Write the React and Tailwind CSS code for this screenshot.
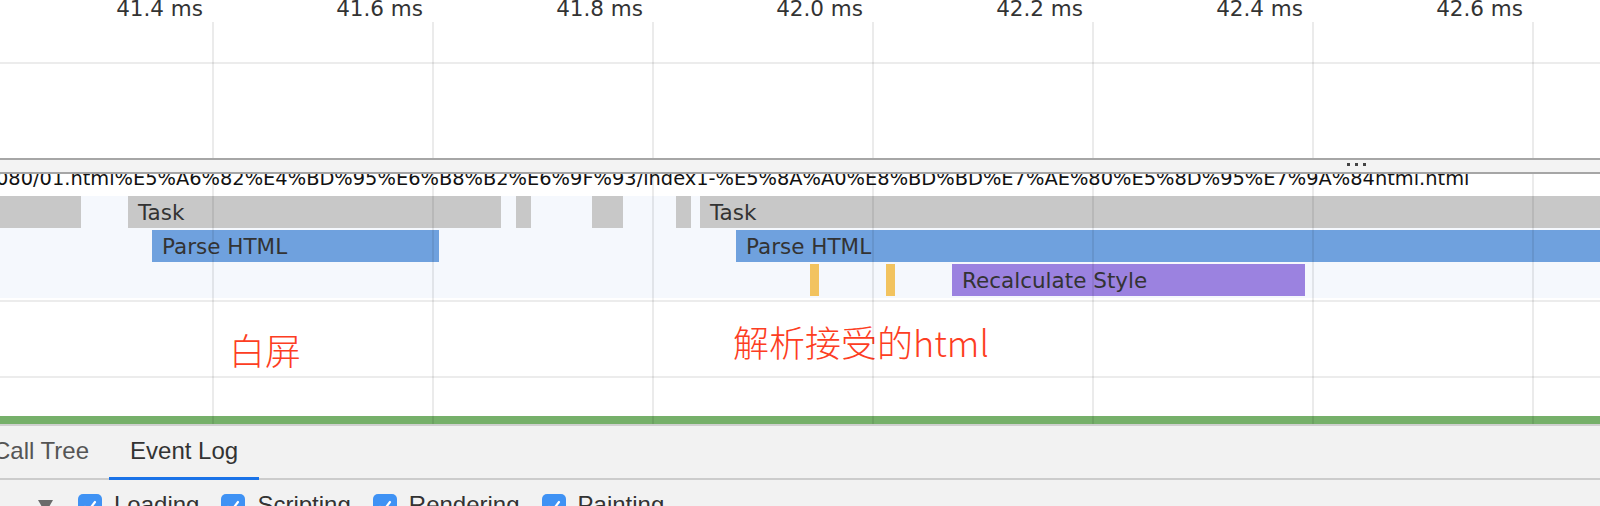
import React from "react";

const ticks = ["41.4", "41.6", "41.8", "42.0", "42.2", "42.4", "42.6"];

const url =
  "080/01.html%E5%A6%82%E4%BD%95%E6%B8%B2%E6%9F%93/index1-%E5%8A%A0%E8%BD%BD%E7%AE%80%E5%8D%95%E7%9A%84html.html";

const taskBars = [
  { left: 0, width: 81, cls: "bg-[#c8c8c8]" },
  { left: 128, width: 373, cls: "bg-[#c8c8c8]", label: "Task" },
  { left: 516, width: 15, cls: "bg-[#c8c8c8]" },
  { left: 592, width: 31, cls: "bg-[#c8c8c8]" },
  { left: 676, width: 15, cls: "bg-[#c8c8c8]" },
  { left: 700, width: 900, cls: "bg-[#c8c8c8]", label: "Task" },
];

const parseBars = [
  { left: 152, width: 287, cls: "bg-[#6fa1de]", label: "Parse HTML" },
  { left: 736, width: 864, cls: "bg-[#6fa1de]", label: "Parse HTML" },
];

const styleBars = [
  { left: 810, width: 9, cls: "bg-[#f2c35f]" },
  { left: 886, width: 9, cls: "bg-[#f2c35f]" },
  { left: 952, width: 353, cls: "bg-[#9b82e0]", label: "Recalculate Style" },
];

const filters = ["Loading", "Scripting", "Rendering", "Painting"];

const FlameRow = ({ bars }) => (
  <div className="relative h-[32px]">
    {bars.map((b, i) => (
      <div
        key={i}
        className={`absolute top-0 h-full overflow-hidden whitespace-nowrap ${b.cls}`}
        style={{ left: b.left, width: b.width }}
      >
        {b.label && (
          <span className="block pl-[10px] text-[21.5px] leading-[33px] text-[#333]">
            {b.label}
          </span>
        )}
      </div>
    ))}
  </div>
);

const Checkbox = () => (
  <div className="w-[24px] h-[24px] shrink-0 rounded-[5px] bg-[#3f92f4] flex items-start justify-center pt-[5px]">
    <svg width="14" height="14" viewBox="0 0 14 14">
      <path d="M2 8 L5.5 11.5 L12 3" fill="none" stroke="white" strokeWidth="2.2" strokeLinecap="round" strokeLinejoin="round" />
    </svg>
  </div>
);

export default function App() {
  return (
    <div className="relative w-[1600px] h-[506px] overflow-hidden bg-white font-['DejaVu_Sans',sans-serif]">
      {/* timeline */}
      <div className="relative">
        {/* ruler */}
        <div className="flex ml-[-7px] h-[22px]">
          {ticks.map((t) => (
            <div key={t} className="w-[220px] shrink-0 pr-[10px] text-right text-[21.5px] leading-[18px] text-[#333] whitespace-nowrap">
              {t} ms
            </div>
          ))}
        </div>

        <div className="h-[40px]" />
        <div className="h-[2px] bg-[#ececec]" />
        <div className="h-[94px]" />

        {/* overview band */}
        <div className="relative z-10 h-[16px] border-y-2 border-[#a6a6a6] bg-[#f3f3f3]">
          <div className="flex gap-[5px] ml-[1347px] pt-[3px]">
            <div className="w-[3px] h-[3px] bg-[#444]" />
            <div className="w-[3px] h-[3px] bg-[#444]" />
            <div className="w-[3px] h-[3px] bg-[#444]" />
          </div>
        </div>

        {/* url row */}
        <div className="h-[22px] overflow-hidden">
          <div className="ml-[-4px] whitespace-nowrap text-[19.4px] leading-[10px] text-[#111]">
            {url}
          </div>
        </div>

        {/* flame chart */}
        <div className="bg-[#f5f8fd] flex flex-col gap-[2px] pb-[2px]">
          <FlameRow bars={taskBars} />
          <FlameRow bars={parseBars} />
          <FlameRow bars={styleBars} />
        </div>

        <div className="h-[2px]" />
        <div className="h-[2px] bg-[#ececec]" />

        {/* annotations */}
        <div className="h-[74px] flex items-start font-['Noto_Sans_CJK_SC',sans-serif] font-light text-[36px] leading-[36px] text-[#fd3d22]">
          <span className="ml-[229px] w-[504px] mt-[29px]">白屏</span>
          <span className="mt-[21px] whitespace-nowrap">解析接受的html</span>
        </div>

        <div className="h-[2px] bg-[#ececec]" />
        <div className="h-[38px]" />
        <div className="h-[8px] bg-[#76b06a]" />

        {/* grid lines */}
        <div className="pointer-events-none absolute left-0 right-0 top-[22px] h-[402px] flex ml-[-6px]">
          {ticks.map((t) => (
            <div key={t} className="w-[220px] shrink-0 h-full border-r-2 border-black/[0.08]" />
          ))}
        </div>
      </div>

      {/* bottom panel */}
      <div className="h-[2px] bg-[#d0d0d0]" />
      <div className="bg-[#f2f2f2] h-[80px] font-['Liberation_Sans',Arial,sans-serif]">
        <div className="flex h-[54px] border-b-2 border-[#cccccc]">
          <div className="ml-[-27px] px-[20px] pt-[12px] mb-[-2px] text-[24px] leading-[26px] text-[#555] border-b-[3px] border-transparent">
            Call Tree
          </div>
          <div className="px-[21px] pt-[12px] mb-[-2px] text-[24px] leading-[26px] text-[#333] border-b-[3px] border-[#1a73e8]">
            Event Log
          </div>
        </div>
        <div className="flex items-start pt-[14px]">
          <svg className="ml-[38px] mt-[6px] mr-[25px]" width="15" height="13" viewBox="0 0 15 13">
            <polygon points="0,0 15,0 7.5,13" fill="#6b6b6b" />
          </svg>
          {filters.map((f) => (
            <div key={f} className="flex items-start mr-[22px]">
              <Checkbox />
              <span className="ml-[12px] mt-[-2px] text-[24px] leading-[26px] text-[#333]">{f}</span>
            </div>
          ))}
        </div>
      </div>
    </div>
  );
}
